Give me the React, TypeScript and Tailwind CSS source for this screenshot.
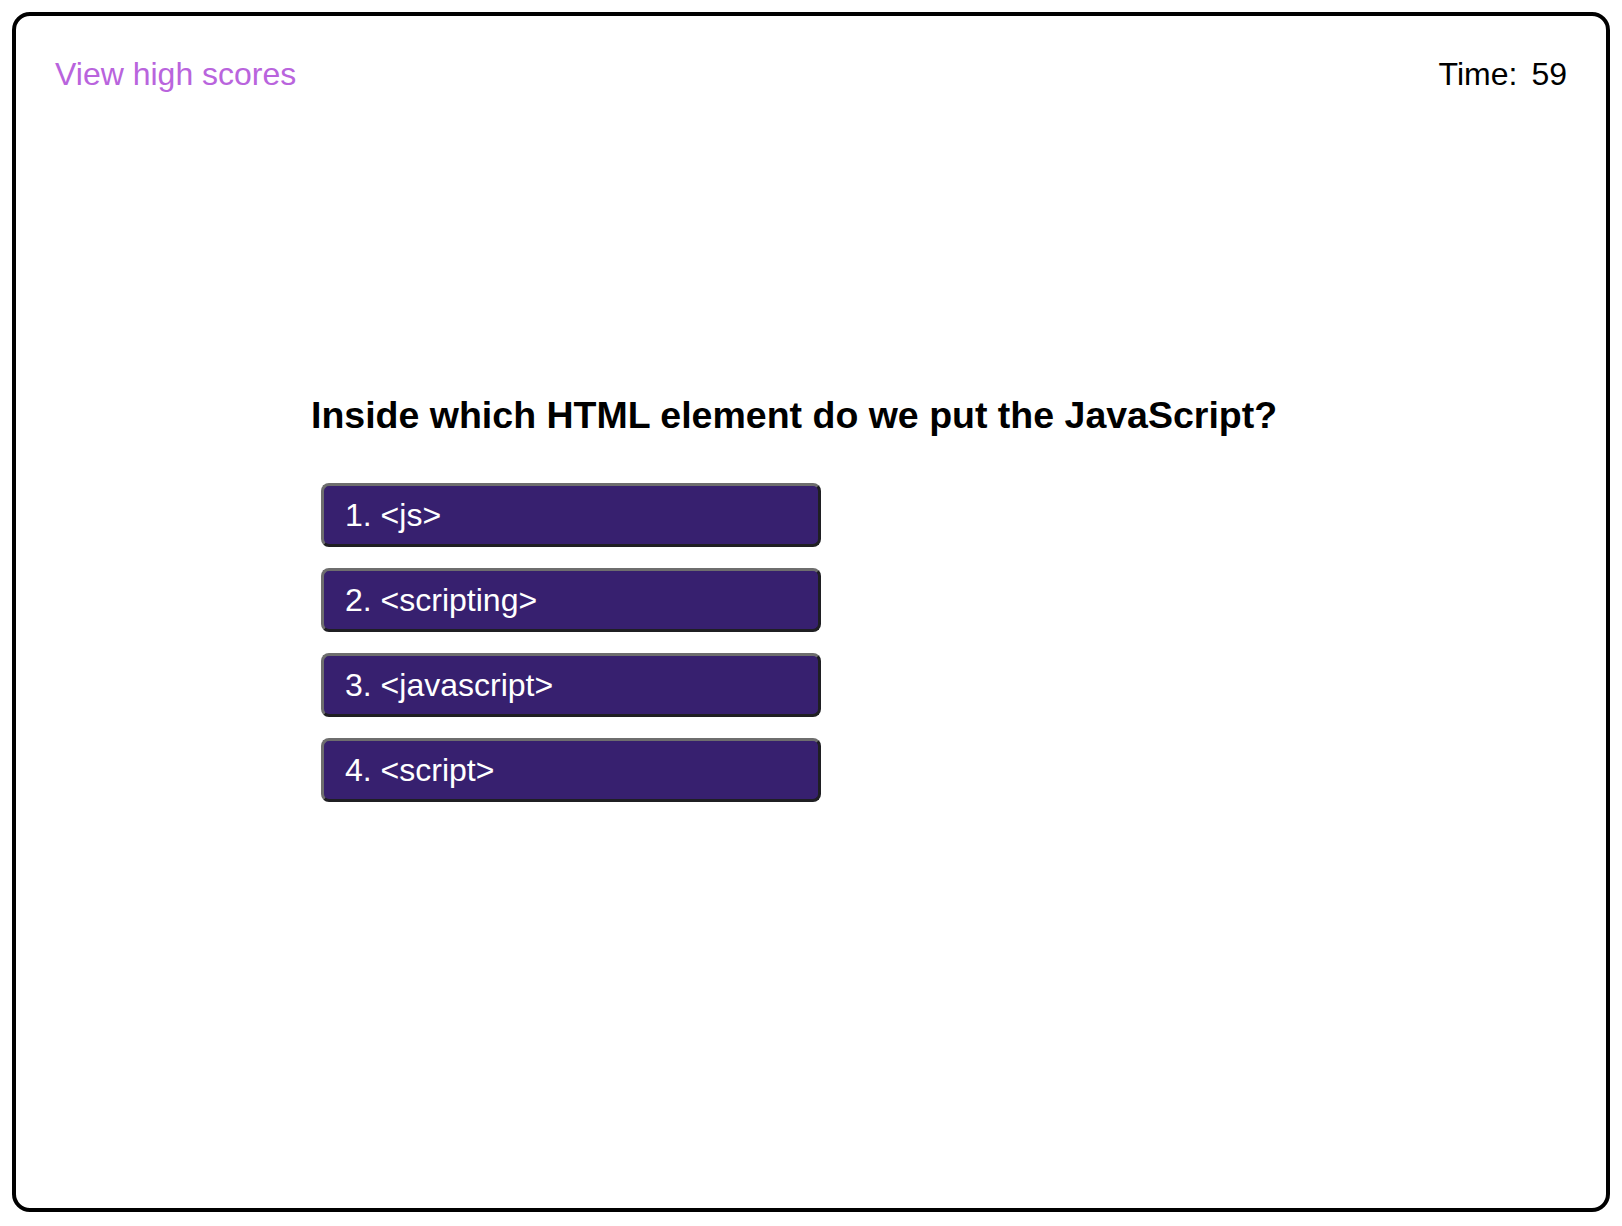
import React from "react";

const choices = ["<js>", "<scripting>", "<javascript>", "<script>"];

export default function App() {
  return (
    <div className="bg-white p-3 pb-[14px]" style={{ fontFamily: '"Liberation Sans", Arial, sans-serif' }}>
      <div className="h-[1200px] rounded-[18px] border-[4px] border-black px-[39px] pt-[40px]">
        <header className="flex items-start justify-between text-[32px] leading-[36px]">
          <a href="#" className="text-[#b964dd]">
            View high scores
          </a>
          <div className="text-black">
            <span>Time:</span>
            <span className="ml-[14px]">59</span>
          </div>
        </header>

        <main className="mx-auto mt-[302px] w-[1000px]">
          <h2 className="text-[37.5px] font-bold leading-[42px] text-black">
            Inside which HTML element do we put the JavaScript?
          </h2>
          <ul className="ml-[10px] mt-[47px] flex flex-col gap-[21px]">
            {choices.map((c, i) => (
              <li key={i}>
                <button className="flex h-[64px] w-[500px] items-center rounded-[8px] border-[3px] border-t-[#6e6e6e] border-l-[#6e6e6e] border-b-[#1f1f23] border-r-[#1f1f23] bg-[#37206f] pl-[21px] text-left text-[32px] text-white">
                  {i + 1}. {c}
                </button>
              </li>
            ))}
          </ul>
        </main>
      </div>
    </div>
  );
}
